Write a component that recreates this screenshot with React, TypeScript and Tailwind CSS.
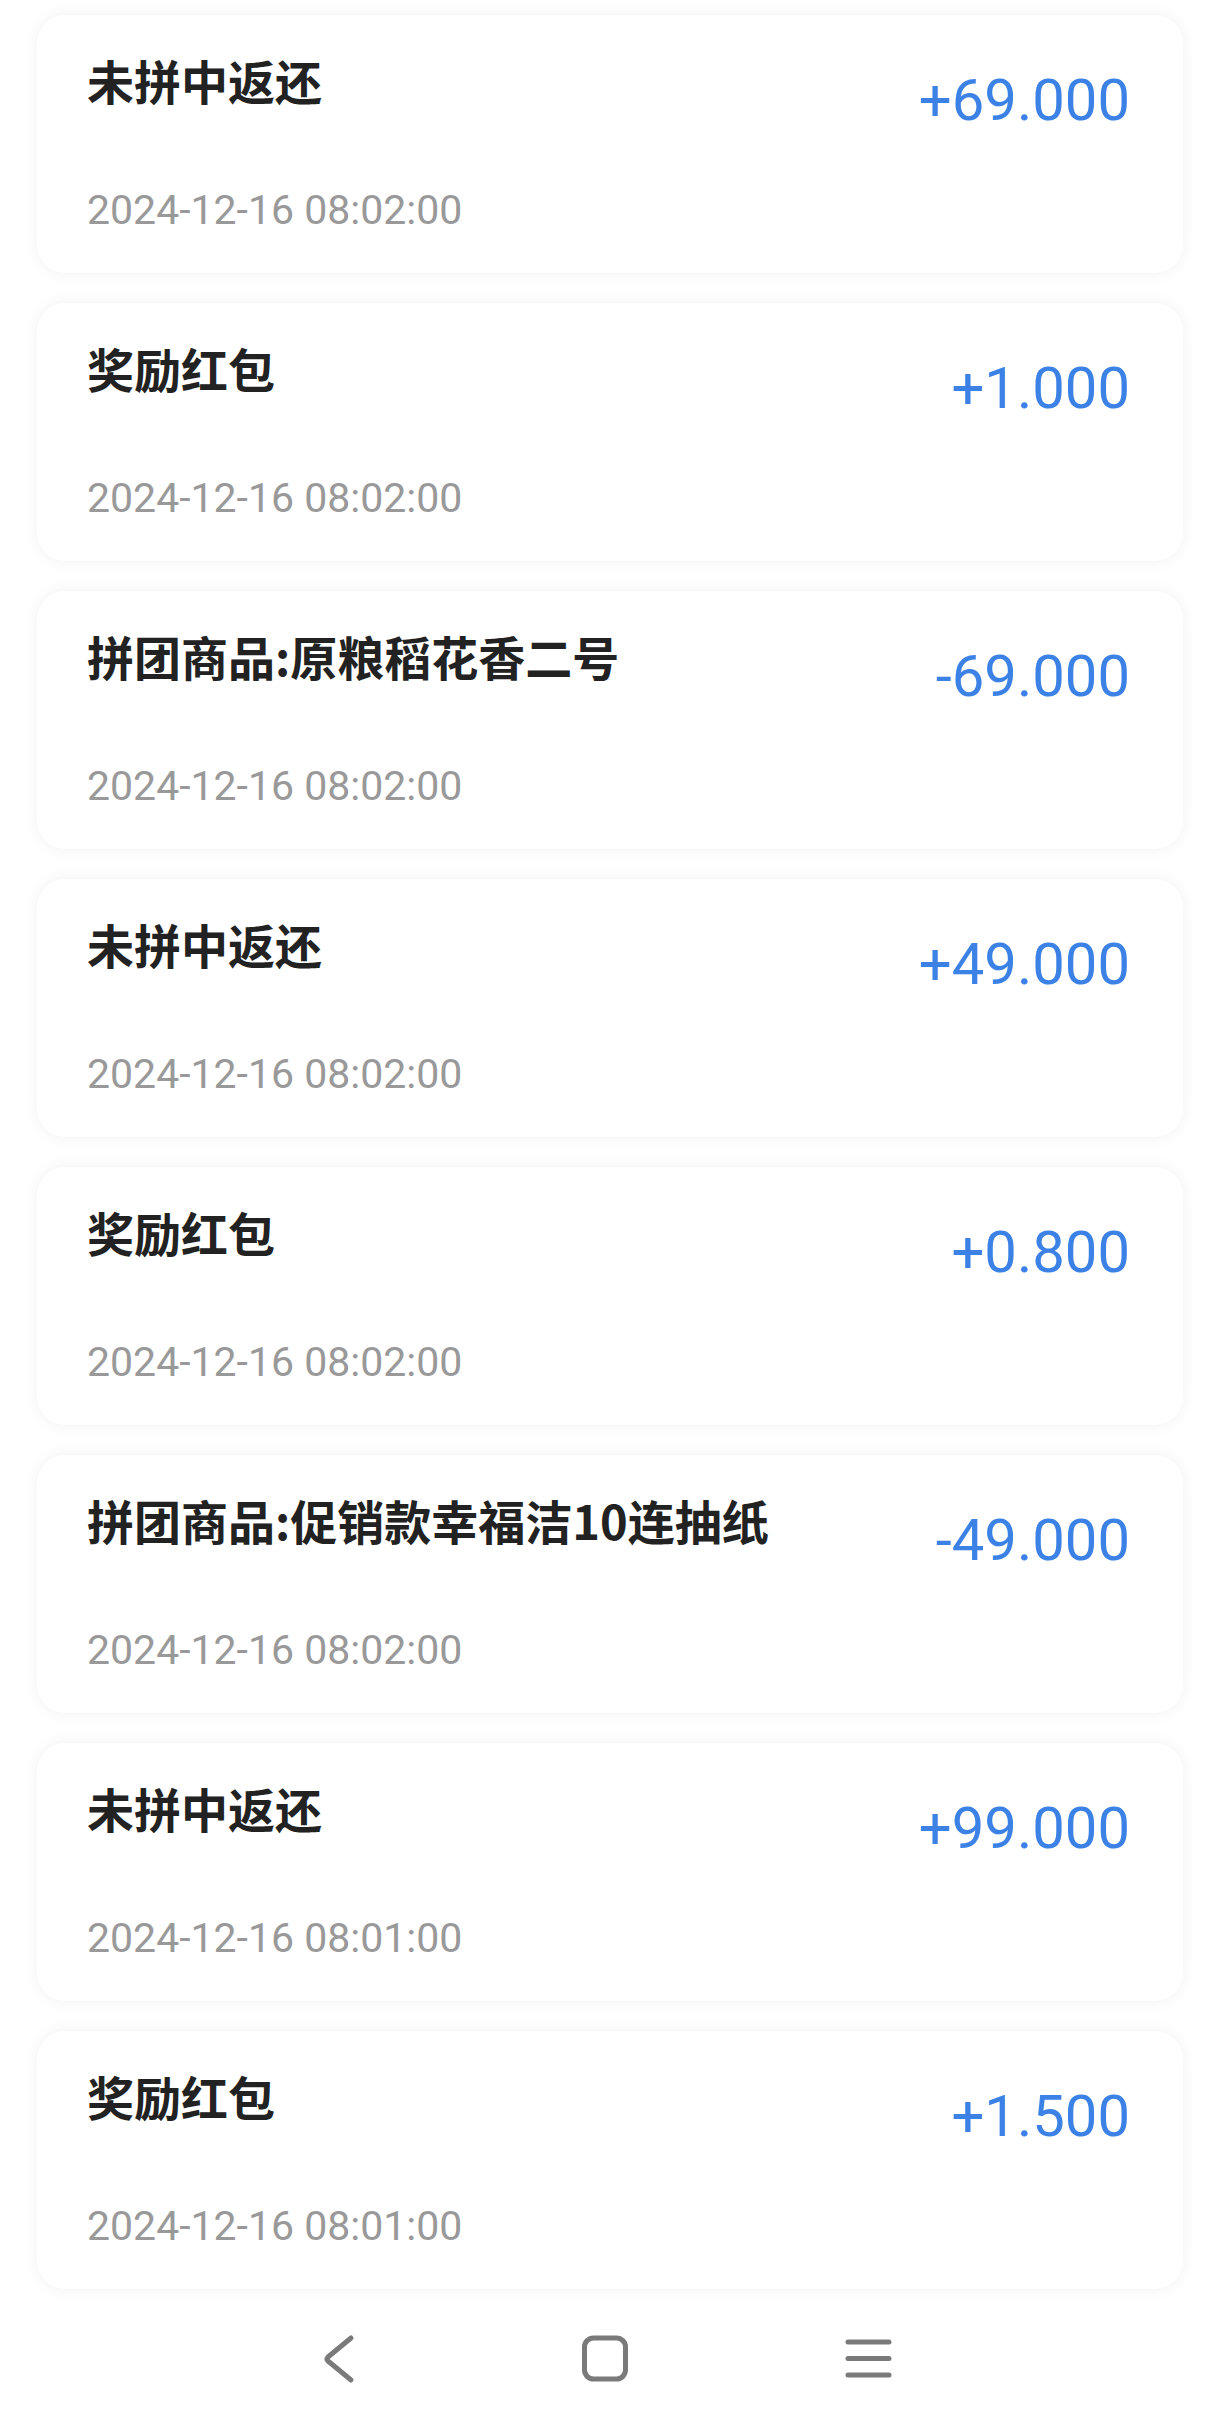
import React from "react";

type Item = { title: string; amount: string; time: string };

const items: Item[] = [
  { title: "未拼中返还", amount: "+69.000", time: "2024-12-16 08:02:00" },
  { title: "奖励红包", amount: "+1.000", time: "2024-12-16 08:02:00" },
  { title: "拼团商品:原粮稻花香二号", amount: "-69.000", time: "2024-12-16 08:02:00" },
  { title: "未拼中返还", amount: "+49.000", time: "2024-12-16 08:02:00" },
  { title: "奖励红包", amount: "+0.800", time: "2024-12-16 08:02:00" },
  { title: "拼团商品:促销款幸福洁10连抽纸", amount: "-49.000", time: "2024-12-16 08:02:00" },
  { title: "未拼中返还", amount: "+99.000", time: "2024-12-16 08:01:00" },
  { title: "奖励红包", amount: "+1.500", time: "2024-12-16 08:01:00" },
];

function Card({ item }: { item: Item }) {
  return (
    <div className="flex h-[258px] items-start justify-between rounded-[28px] bg-white pl-[50px] pr-[53px] pt-[37px] shadow-[0_0_16px_rgba(0,0,0,0.06)]">
      <div className="flex flex-col">
        <div
          className="text-[47px] font-bold leading-[56px] text-[#222222]"
          style={{ fontFamily: '"Noto Sans CJK SC", "Noto Sans", sans-serif' }}
        >
          {item.title}
        </div>
        <div
          className="mt-[78px] text-[41px] leading-[48px] text-[#999999]"
          style={{ fontFamily: 'Roboto, "Noto Sans", sans-serif' }}
        >
          {item.time}
        </div>
      </div>
      <div
        className="mt-[14px] text-[58px] leading-[68px] text-[#3c82e6]"
        style={{ fontFamily: 'Roboto, "Noto Sans", sans-serif' }}
      >
        {item.amount}
      </div>
    </div>
  );
}

export default function App() {
  return (
    <div className="flex min-h-[2434px] w-full flex-col bg-white">
      <div className="flex flex-col gap-[30px] px-[37px] pt-[15px]">
        {items.map((it, i) => (
          <Card key={i} item={it} />
        ))}
      </div>
      <div className="flex h-[144px] items-center justify-center gap-[216px] pb-[4px] pr-[8px]">
        <svg width="46" height="50" viewBox="0 0 46 50" className="translate-x-[-2px]">
          <path
            d="M33 4 L10 23 Q8 25 10 27 L33 46"
            fill="none"
            stroke="#7a7a7a"
            strokeWidth="5"
            strokeLinecap="round"
            strokeLinejoin="round"
          />
        </svg>
        <svg width="46" height="48" viewBox="0 0 46 48">
          <rect x="2.5" y="3" width="41" height="41" rx="9" fill="none" stroke="#7a7a7a" strokeWidth="5" />
        </svg>
        <svg width="48" height="48" viewBox="0 0 48 48">
          <path
            d="M4 7 H45 M4 23.5 H45 M4 40 H45"
            fill="none"
            stroke="#7a7a7a"
            strokeWidth="5"
            strokeLinecap="round"
          />
        </svg>
      </div>
    </div>
  );
}
